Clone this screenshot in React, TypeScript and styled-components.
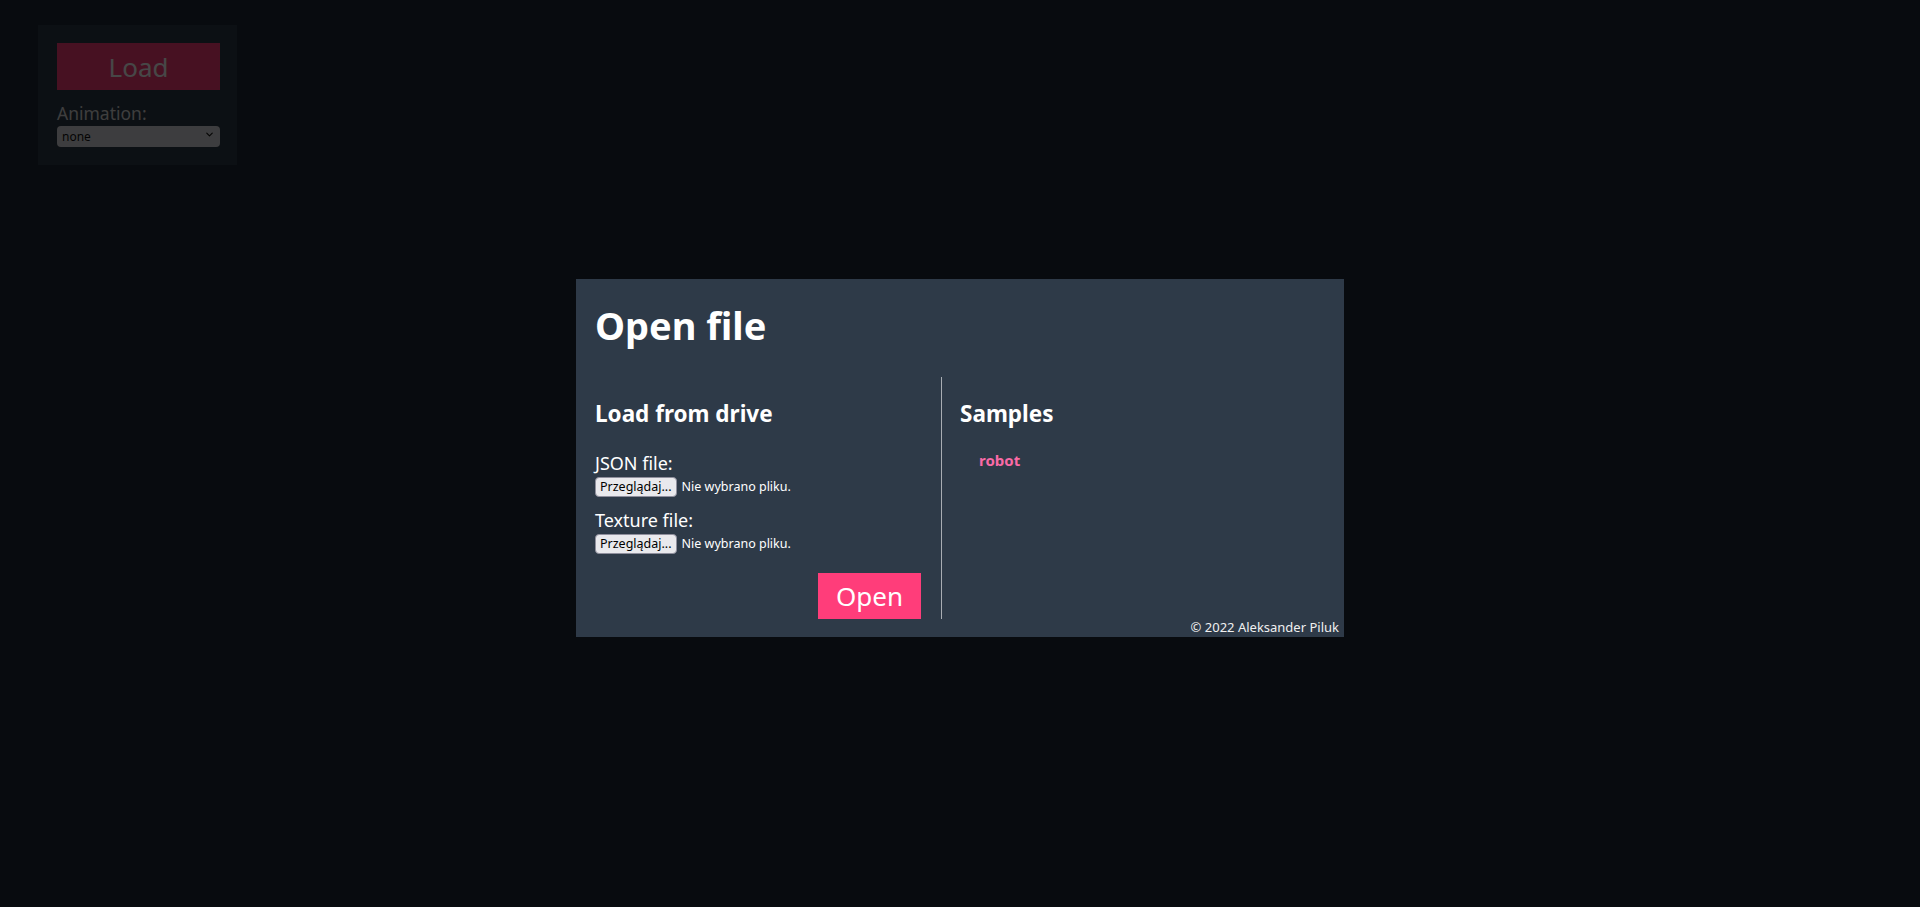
import React from "react";
import styled, { createGlobalStyle } from "styled-components";
import { ChevronDown } from "lucide-react";

const Global = createGlobalStyle`
  html, body { margin: 0; padding: 0; }
  body {
    background: #1d2a38;
    font-family: "Noto Sans", "Open Sans", sans-serif;
    color: #ffffff;
    height: 907px;
    overflow: hidden;
  }
`;

const Page = styled.div`
  position: relative;
  width: 1920px;
  height: 907px;
  padding: 25px 0 0 38px;
  box-sizing: border-box;
`;

const Panel = styled.div`
  width: 199px;
  height: 140px;
  box-sizing: border-box;
  background: #2e3a48;
  padding: 18px 17px 0 19px;
  display: flex;
  flex-direction: column;
`;

const LoadButton = styled.button`
  width: 163px;
  height: 47px;
  border: none;
  background: #ff3d7a;
  color: #ffffff;
  font-family: "Noto Sans", sans-serif;
  font-size: 26px;
  padding: 0;
`;

const FieldLabel = styled.label`
  display: block;
  font-size: 17.5px;
  line-height: 20px;
  margin-top: 13px;
  color: #dddddd;
`;

const SelectWrap = styled.div`
  position: relative;
  width: 163px;
  height: 21px;
  margin-top: 1px;
`;

const Select = styled.select`
  appearance: none;
  width: 100%;
  height: 100%;
  border: none;
  border-radius: 4px;
  background: #dcdce0;
  color: #111;
  font-family: "Noto Sans", sans-serif;
  font-size: 12px;
  padding: 0 0 0 5px;
`;

const SelectChevron = styled.span`
  position: absolute;
  right: 5px;
  top: 5px;
  display: flex;
  color: #111;
  pointer-events: none;
`;

const Overlay = styled.div`
  position: fixed;
  inset: 0;
  background: rgba(0, 0, 0, 0.72);
  display: flex;
  justify-content: center;
  align-items: flex-start;
  padding-top: 279px;
  box-sizing: border-box;
`;

const Modal = styled.div`
  position: relative;
  width: 768px;
  height: 358px;
  box-sizing: border-box;
  background: #2e3a48;
  padding: 22px 19px 18px;
  display: flex;
  flex-direction: column;
`;

const Title = styled.h1`
  margin: 0;
  font-size: 38px;
  line-height: 48px;
  font-weight: 700;
  color: #ffffff;
`;

const Columns = styled.div`
  margin-top: 28px;
  display: grid;
  grid-template-columns: 346px 1fr;
  height: 242px;
`;

const LeftCol = styled.div`
  display: flex;
  flex-direction: column;
  padding-right: 20px;
  padding-top: 22px;
`;

const RightCol = styled.div`
  border-left: 1px solid #a9adb3;
  padding: 22px 0 0 18px;
`;

const SectionTitle = styled.h2`
  margin: 0;
  font-size: 22.5px;
  line-height: 30px;
  font-weight: 700;
  color: #ffffff;
`;

const InputLabel = styled.label<{ $first?: boolean }>`
  display: block;
  font-size: 18px;
  line-height: 20px;
  margin-top: ${(p) => (p.$first ? "24px" : "13px")};
  color: #ffffff;
`;

const FileRow = styled.div`
  display: flex;
  align-items: center;
  margin-top: 3px;
  height: 21px;
`;

const BrowseButton = styled.button`
  height: 20px;
  box-sizing: border-box;
  padding: 0 4px;
  border: 1px solid #8f8f9d;
  border-radius: 4px;
  background: #e9e9ed;
  color: #000;
  font-family: "Noto Sans", sans-serif;
  font-size: 12.5px;
  line-height: 16px;
`;

const FileName = styled.span`
  margin-left: 5px;
  font-size: 12.5px;
  color: #ffffff;
`;

const Actions = styled.div`
  margin-top: auto;
  display: flex;
  justify-content: flex-end;
`;

const OpenButton = styled.button`
  width: 103px;
  height: 46px;
  border: none;
  background: #ff3d7a;
  color: #ffffff;
  font-family: "Noto Sans", sans-serif;
  font-size: 26px;
  padding: 0;
`;

const SampleList = styled.ul`
  list-style: none;
  margin: 21px 0 0;
  padding: 0 0 0 19px;
`;

const SampleItem = styled.li`
  font-size: 15px;
  font-weight: 700;
  line-height: 20px;
  color: #f96aa6;
  cursor: pointer;
`;

const Copyright = styled.div`
  position: absolute;
  right: 5px;
  bottom: 1px;
  font-size: 13px;
  line-height: 18px;
  color: #f0f0f0;
`;

export default function App() {
  return (
    <>
      <Global />
      <Page>
        <Panel>
          <LoadButton>Load</LoadButton>
          <FieldLabel>Animation:</FieldLabel>
          <SelectWrap>
            <Select defaultValue="none">
              <option value="none">none</option>
            </Select>
            <SelectChevron>
              <ChevronDown size={11} strokeWidth={2.5} />
            </SelectChevron>
          </SelectWrap>
        </Panel>
      </Page>
      <Overlay>
        <Modal>
          <Title>Open file</Title>
          <Columns>
            <LeftCol>
              <SectionTitle>Load from drive</SectionTitle>
              <InputLabel $first>JSON file:</InputLabel>
              <FileRow>
                <BrowseButton>Przeglądaj...</BrowseButton>
                <FileName>Nie wybrano pliku.</FileName>
              </FileRow>
              <InputLabel>Texture file:</InputLabel>
              <FileRow>
                <BrowseButton>Przeglądaj...</BrowseButton>
                <FileName>Nie wybrano pliku.</FileName>
              </FileRow>
              <Actions>
                <OpenButton>Open</OpenButton>
              </Actions>
            </LeftCol>
            <RightCol>
              <SectionTitle>Samples</SectionTitle>
              <SampleList>
                <SampleItem>robot</SampleItem>
              </SampleList>
            </RightCol>
          </Columns>
          <Copyright>© 2022 Aleksander Piluk</Copyright>
        </Modal>
      </Overlay>
    </>
  );
}
